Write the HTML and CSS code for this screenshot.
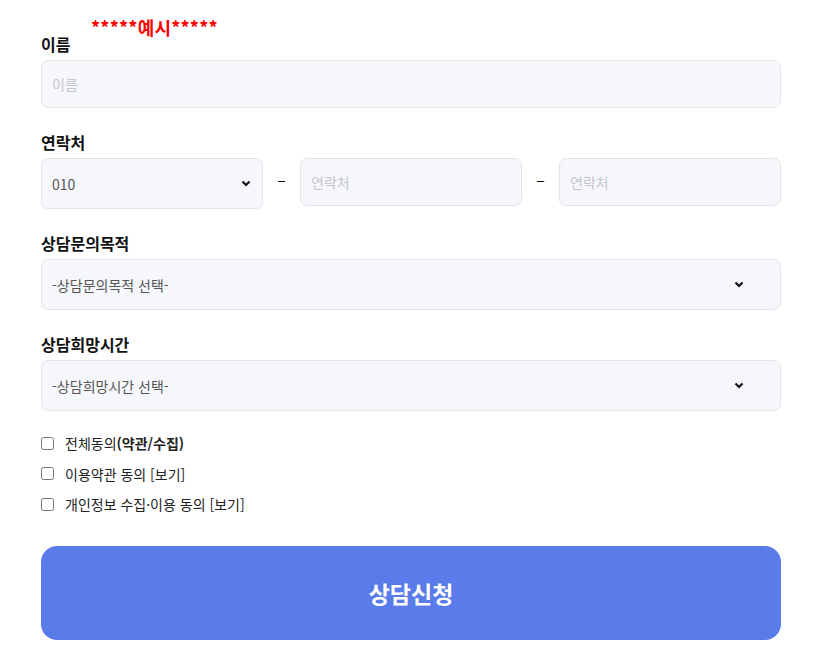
FILE: index.html
```html
<!DOCTYPE html>
<html lang="ko">

<head>
    <meta charset="UTF-8">
    <meta name="viewport" content="width=device-width, initial-scale=1.0">
    <title>상담신청</title>
    <link rel="stylesheet" href="styles.css">
</head>

<body>
    <form class="consult-form" action="#" method="post">
        <span class="sample-mark">*****예시*****</span>

        <div class="form-group">
            <label class="form-label" for="name">이름</label>
            <input class="form-input" type="text" id="name" placeholder="이름">
        </div>

        <div class="form-group">
            <label class="form-label" for="phone2">연락처</label>
            <div class="phone-row">
                <div class="phone-field select-wrap small">
                    <select class="form-select" id="phone1">
                        <option>010</option>
                        <option>011</option>
                        <option>016</option>
                        <option>017</option>
                    </select>
                    <svg class="chevron" width="10" height="7" viewBox="0 0 10 7"><path d="M1.5 1.5 L5 5 L8.5 1.5" fill="none" stroke="#111" stroke-width="2.2"/></svg>
                </div>
                <span class="dash">&ndash;</span>
                <div class="phone-field">
                    <input class="form-input" type="text" id="phone2" placeholder="연락처">
                </div>
                <span class="dash">&ndash;</span>
                <div class="phone-field">
                    <input class="form-input" type="text" id="phone3" placeholder="연락처">
                </div>
            </div>
        </div>

        <div class="form-group">
            <label class="form-label" for="purpose">상담문의목적</label>
            <div class="select-wrap">
                <select class="form-select" id="purpose">
                    <option>-상담문의목적 선택-</option>
                </select>
                <svg class="chevron" width="10" height="7" viewBox="0 0 10 7"><path d="M1.5 1.5 L5 5 L8.5 1.5" fill="none" stroke="#111" stroke-width="2.2"/></svg>
            </div>
        </div>

        <div class="form-group">
            <label class="form-label" for="time">상담희망시간</label>
            <div class="select-wrap">
                <select class="form-select" id="time">
                    <option>-상담희망시간 선택-</option>
                </select>
                <svg class="chevron" width="10" height="7" viewBox="0 0 10 7"><path d="M1.5 1.5 L5 5 L8.5 1.5" fill="none" stroke="#111" stroke-width="2.2"/></svg>
            </div>
        </div>

        <div class="agree-list">
            <label class="agree-item"><input type="checkbox" id="agreeAll"> <span>전체동의<b>(약관/수집)</b></span></label>
            <label class="agree-item"><input type="checkbox" id="agreeTerms"> <span>이용약관 동의 [보기]</span></label>
            <label class="agree-item"><input type="checkbox" id="agreePrivacy"> <span>개인정보 수집·이용 동의 [보기]</span></label>
        </div>

        <button class="submit-btn" type="submit">상담신청</button>
    </form>
</body>

</html>
```

FILE: styles.css
```css
body {
    margin: 0;
    font-family: "Noto Sans CJK KR", "Noto Sans", sans-serif;
    color: #111;
    background: #fff;
}

.consult-form {
    position: relative;
    width: 740px;
    padding: 34px 0 0 41px;
}

.sample-mark {
    position: absolute;
    left: 91px;
    top: 15px;
    font-size: 18px;
    font-weight: bold;
    line-height: 24px;
    letter-spacing: 0.2px;
    color: #ff0000;
}

.form-group + .form-group {
    margin-top: 24px;
}

.form-label {
    display: block;
    font-size: 16px;
    font-weight: bold;
    line-height: 20px;
    margin-bottom: 6px;
    color: #111;
}

.form-input,
.form-select {
    box-sizing: border-box;
    width: 100%;
    height: 48px;
    padding: 0 10px;
    font-family: inherit;
    font-size: 14px;
    color: #555;
    background-color: #f6f7fb;
    border: 1px solid #e3e5ea;
    border-radius: 7px;
    outline: none;
}

.form-input::placeholder {
    color: #c4c6cc;
}

.form-select {
    height: 51px;
    appearance: none;
    -webkit-appearance: none;
}

.select-wrap {
    position: relative;
}

.chevron {
    position: absolute;
    right: 37px;
    top: 22px;
    pointer-events: none;
}

.select-wrap.small .chevron {
    right: 12px;
}

.phone-row {
    display: flex;
    align-items: flex-start;
}

.phone-field {
    flex: 1 1 0;
    min-width: 0;
}

.dash {
    width: 37px;
    flex: none;
    text-align: center;
    line-height: 42px;
    font-size: 16px;
    color: #111;
}

.agree-list {
    display: flex;
    flex-direction: column;
    margin-top: 17px;
}

.agree-item {
    display: flex;
    align-items: center;
    height: 30.5px;
    font-size: 14px;
    color: #222;
}

.agree-item input {
    width: 13px;
    height: 13px;
    margin: 0 11px 0 0;
}

.agree-item b {
    font-weight: bold;
}

.submit-btn {
    display: block;
    width: 100%;
    height: 94px;
    margin-top: 26px;
    border: none;
    border-radius: 16px;
    background-color: #5a7bea;
    color: #fff;
    font-family: inherit;
    font-size: 23px;
    font-weight: bold;
    cursor: pointer;
}
```
